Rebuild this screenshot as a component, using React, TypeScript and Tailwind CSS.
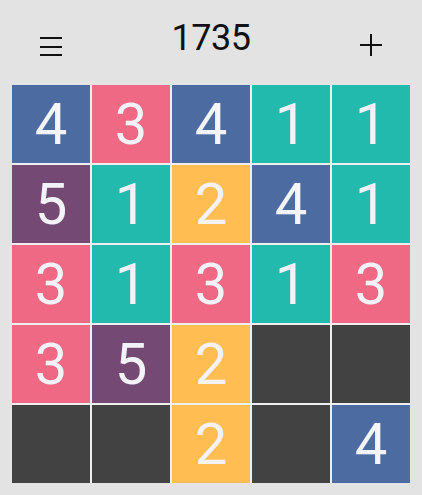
const BLUE = 'bg-[#4c6ba1]'
const PINK = 'bg-[#ef6984]'
const TEAL = 'bg-[#22baad]'
const YELLOW = 'bg-[#ffbd52]'
const PURPLE = 'bg-[#744a75]'
const DARK = 'bg-[#424242]'

type Cell = { v?: number; c: string }

const board: Cell[][] = [
  [{ v: 4, c: BLUE }, { v: 3, c: PINK }, { v: 4, c: BLUE }, { v: 1, c: TEAL }, { v: 1, c: TEAL }],
  [{ v: 5, c: PURPLE }, { v: 1, c: TEAL }, { v: 2, c: YELLOW }, { v: 4, c: BLUE }, { v: 1, c: TEAL }],
  [{ v: 3, c: PINK }, { v: 1, c: TEAL }, { v: 3, c: PINK }, { v: 1, c: TEAL }, { v: 3, c: PINK }],
  [{ v: 3, c: PINK }, { v: 5, c: PURPLE }, { v: 2, c: YELLOW }, { c: DARK }, { c: DARK }],
  [{ c: DARK }, { c: DARK }, { v: 2, c: YELLOW }, { c: DARK }, { v: 4, c: BLUE }],
]

export default function App() {
  return (
    <div className="h-[495px] w-[422px] bg-[#e3e3e3] px-3 font-['Roboto',sans-serif]">
      <div className="flex h-[85px] items-start justify-between">
        <button type="button" className="ml-[28px] mt-[37px] flex w-[22px] flex-col gap-[6.5px]">
          <span className="h-[2px] w-full bg-[#111]" />
          <span className="h-[2px] w-full bg-[#111]" />
          <span className="h-[2px] w-full bg-[#111]" />
        </button>
        <h1 className="mt-[20px] text-[36px] leading-[36px] font-normal tracking-[-0.5px] text-[#111]">1735</h1>
        <button type="button" className="relative mr-[28px] mt-[34px] h-[22px] w-[22px]">
          <span className="absolute left-0 top-[10px] h-[2px] w-full bg-[#111]" />
          <span className="absolute left-[10px] top-0 h-full w-[2px] bg-[#111]" />
        </button>
      </div>
      <div className="grid w-[398px] grid-cols-5 gap-[2px] bg-[#efefef]">
        {board.flat().map((cell, i) => (
          <div
            key={i}
            className={`flex h-[78px] items-center justify-center text-[58px] leading-none text-[#f2f2f7] ${cell.c}`}
          >
            {cell.v}
          </div>
        ))}
      </div>
    </div>
  )
}
